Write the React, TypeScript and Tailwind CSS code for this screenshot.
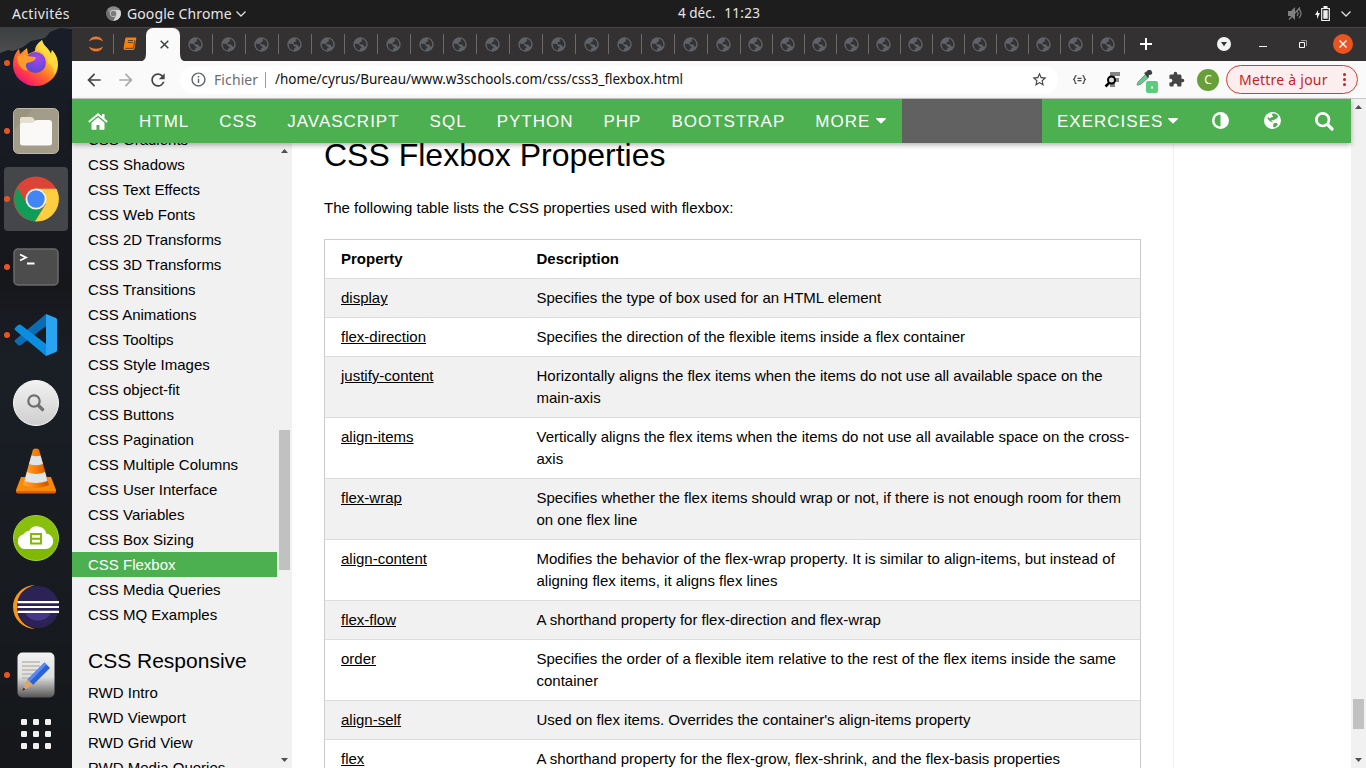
import React from "react";
import { MdExtension, MdStarBorder, MdRefresh, MdArrowBack, MdArrowForward, MdInfoOutline } from "react-icons/md";

const ui = "font-['Noto_Sans',sans-serif]";

/* ---------- Dock ---------- */
const Firefox = () => (
  <svg width="46" height="48" viewBox="0 0 46 48">
    <defs>
      <linearGradient id="ffo" x1="0.85" y1="0.1" x2="0.2" y2="0.95">
        <stop offset="0" stopColor="#fff44f" /><stop offset="0.35" stopColor="#ffb02a" />
        <stop offset="0.6" stopColor="#ff6a2a" /><stop offset="0.85" stopColor="#ff2d55" /><stop offset="1" stopColor="#e0128c" />
      </linearGradient>
      <radialGradient id="ffp" cx="0.6" cy="0.3" r="0.8"><stop offset="0" stopColor="#a644ec" /><stop offset="1" stopColor="#4d4bd0" /></radialGradient>
    </defs>
    <path d="M29 1c1 6 7 8 9 14l1-4c4 4 6 9 6 15a22.500 21 0 0 1-45 0c0-7 2-12 6-16l1 5 7-6 1 6 7-3c0-5 3-8 7-11z" fill="url(#ffo)" />
    <circle cx="22.500" cy="23.500" r="10.500" fill="url(#ffp)" />
    <path d="M24 10c2-1 3-6 5-9 1 6 7 8 9 14l1-4c6 7 8 17 2 25 0-7-2-10-6-12 0-7-5-11-11-14z" fill="#ffdf3f" opacity=".8" />
    <path d="M4 18c3-3 7-3 11-1 3 1 7 0 8 2-1 3-5 4-9 5-2 2-1 5 1 8-7-1-11-7-11-14z" fill="#ff9a2b" />
  </svg>
);
const Files = () => (
  <svg width="46" height="46" viewBox="0 0 46 46">
    <rect x=".5" y=".5" width="45" height="45" rx="5" fill="#a39c88" stroke="#bdb8a8" />
    <path d="M1 5q0-4 4-4h15L1 22z" fill="#958e79" opacity=".6" />
    <path d="M7 14v-3q0-2 2-2h9q2 0 3 2l1 2h8v8H7z" fill="#e3dfd3" />
    <path d="M7 17q0-2 2-2h10q1 0 2-1.500T24 12h12q3 0 3 3v20q0 2.500-3 2.500H10q-3 0-3-2.500z" fill="#faf9f7" />
  </svg>
);
const Chrome = ({ size = 46, gray = false }: { size?: number; gray?: boolean }) => (
  <svg width={size} height={size} viewBox="0 0 46 46">
    <circle cx="23" cy="23" r="22.500" fill={gray ? "#8b8b8b" : "#db4437"} />
    <path d="M4.500 11.500A22.500 22.500 0 0 0 22 45.500L32 28.500 23 33 13.500 28z" fill={gray ? "#6e6e6e" : "#0f9d58"} />
    <path d="M43.500 13A22.500 22.500 0 0 1 22 45.500L32.500 28.500 31 13z" fill={gray ? "#d8d8d8" : "#ffcd40"} />
    <path d="M23 12.800h20.500l-10 4z" fill={gray ? "#d8d8d8" : "#ffcd40"} />
    <circle cx="23" cy="23" r="10.500" fill={gray ? "#ddd" : "#f1f1f1"} />
    <circle cx="23" cy="23" r="8.700" fill={gray ? "#7b7b7b" : "#4285f4"} />
  </svg>
);
const Terminal = () => (
  <svg width="46" height="38" viewBox="0 0 46 38">
    <rect x="1" y="1" width="44" height="36" rx="4" fill="#4c4c4c" stroke="#6a6a6a" strokeWidth="1.500" />
    <path d="M7 6.500l6 3-6 3M14 15.500h7.500" fill="none" stroke="#fff" strokeWidth="1.800" />
  </svg>
);
const Code = () => (
  <svg width="44" height="44" viewBox="0 0 44 44">
    <path d="M1 27L32 1v12L7 32q-1.500 1-3 0l-3-3q-1-1 0-2z" fill="#0a6cb3" />
    <path d="M1 17q-1-1 0-2l3-3q1.500-1 3 0l25 19v12z" fill="#0b8ee0" />
    <path d="M32 1l10 4q1 .5 1 2v30q0 1.500-1 2l-10 4z" fill="#2ba3f3" />
  </svg>
);
const Finder = () => (
  <svg width="46" height="46" viewBox="0 0 46 46">
    <defs><linearGradient id="fg" x1="0" y1="0" x2="0" y2="1"><stop stopColor="#f2f2f2" /><stop offset="1" stopColor="#cecece" /></linearGradient></defs>
    <circle cx="23" cy="23" r="22.500" fill="url(#fg)" stroke="#fafafa" />
    <circle cx="21" cy="21" r="5.700" fill="none" stroke="#707070" strokeWidth="2.200" />
    <path d="M25 25l5.500 5.500" stroke="#707070" strokeWidth="3.200" />
  </svg>
);
const Cone = () => (
  <svg width="40" height="46" viewBox="0 0 40 46">
    <defs><linearGradient id="cg"><stop stopColor="#ffab35" /><stop offset=".55" stopColor="#f57900" /><stop offset="1" stopColor="#c65200" /></linearGradient></defs>
    <path d="M5 29h30l5 13q0 3-2 3H2q-2 0-2-3z" fill="#f78a0a" />
    <path d="M0 43h40q0 2.500-2 2.500H2Q0 45.500 0 43z" fill="#d95f00" />
    <path d="M17 1.500q3-2 6 0L33 37q-13 6-26 0z" fill="url(#cg)" />
    <path d="M15.500 7.500q4.500 1.500 9 0l2.500 8.500q-7 2.500-14 0zM11 24q9 4 18 0l2.500 9q-11.500 4-23 0z" fill="#dfe5e8" />
  </svg>
);
const Cloud = () => (
  <svg className="-mt-0.5" width="46" height="46" viewBox="0 0 46 46">
    <circle cx="23" cy="23" r="22.500" fill="#7fb900" stroke="#a6d53d" />
    <path d="M1 23a22 22 0 0 1 44 0q-22 9-44 0z" fill="#92c81a" opacity=".5" />
    <path d="M13 33a6.500 6.500 0 0 1-1.500-13q1.500-3.500 5-3a8.500 8.500 0 0 1 16 2.500 6.700 6.700 0 0 1 0 13.500z" fill="#fff" stroke="#fff" strokeWidth="2" />
    <path d="M18 19h10v9.500H18zM18 23.700h10" fill="none" stroke="#7fb900" strokeWidth="1.900" />
  </svg>
);
const Eclipse = () => (
  <svg width="48" height="44" viewBox="0 0 48 44">
    <path d="M23 0A22 22 0 0 0 23 44Q5 39 5 22T23 0z" fill="#f7941e" />
    <circle cx="26" cy="22" r="21" fill="#2c2255" />
    <path d="M13 27a13.500 12 0 0 0 26 0z" fill="#443788" />
    <path d="M5.500 17.200h41.500M5.500 22h41.500M5.500 26.800h41.500" stroke="#fff" strokeWidth="2.200" />
  </svg>
);
const Editor = () => (
  <svg width="38" height="46" viewBox="0 0 38 46">
    <defs><linearGradient id="eg" x1="0" y1="0" x2="0" y2="1"><stop stopColor="#f3f3f3" /><stop offset=".55" stopColor="#ddd" /><stop offset="1" stopColor="#555" /></linearGradient></defs>
    <rect x=".5" y=".5" width="37" height="45" rx="5" fill="url(#eg)" />
    <path d="M5 10h18M5 14h18M5 18h15M5 22h14M5 26h12M5 30.500h28" stroke="#bcb8aa" strokeWidth="1.700" />
    <path d="M10.500 27.500L27.500 10.500 33 16 16 33z" fill="#2c62d8" />
    <path d="M10.500 27.500L27.500 10.500l2 2L12.500 30z" fill="#5b8bf0" />
    <path d="M10.500 27.500L5 39l11-6z" fill="#dba36e" /><path d="M6.500 35.500L5 39l3.500-1.800z" fill="#333" />
  </svg>
);
const Grid = () => (
  <svg width="30" height="30" viewBox="0 0 30 30" fill="#f1f0ef">
    {[0, 12, 24].map((y) => [0, 12, 24].map((x) => <rect key={x + "-" + y} x={x} y={y} width="6" height="6" rx="1.200" />))}
  </svg>
);
const dock = [
  { icon: <Firefox />, run: true }, { icon: <Files />, run: true }, { icon: <Chrome />, run: true, active: true },
  { icon: <Terminal />, run: true }, { icon: <Code />, run: true }, { icon: <Finder /> }, { icon: <Cone /> },
  { icon: <Cloud /> }, { icon: <Eclipse /> }, { icon: <Editor />, run: true },
];
const Dock = () => (
  <aside className="relative flex w-[72px] shrink-0 flex-col items-center gap-1 overflow-hidden bg-[linear-gradient(#181e28,#16171b_35%,#1a1f26_45%,#15171a)] pt-1">
    <svg className="absolute left-0 top-0" width="72" height="30" viewBox="0 0 72 30">
      <defs><linearGradient id="sky" x1="0" y1="0" x2="0" y2="1"><stop stopColor="#3c3f40" /><stop offset="1" stopColor="#4b4d4e" /></linearGradient></defs>
      <path d="M0 0h72v2L60 1 50 5 45 11 31 14 23 20 13 24 8 23 0 26z" fill="url(#sky)" />
    </svg>
    {dock.map((d, i) => (
      <div key={i} className={`relative flex h-16 w-16 shrink-0 items-center justify-center rounded ${d.active ? "bg-[#454649]" : ""}`}>
        {d.run && <span className="absolute left-0 top-[29px] h-1.5 w-1.5 rounded-full bg-[#e95420]" />}
        {d.icon}
      </div>
    ))}
    <div className="pt-[8px]"><Grid /></div>
  </aside>
);

/* ---------- System bar ---------- */
const SystemBar = () => (
  <header className={`${ui} flex h-[27px] shrink-0 items-center bg-[#1d1d1d] text-[14px] text-[#e6e6e6]`}>
    <div className="w-[106px] pl-3 tracking-[0.35px]">Activités</div>
    <Chrome size={15} gray />
    <span className="ml-1.5 w-[105px] whitespace-nowrap tracking-[0.1px]">Google Chrome</span>
    <svg className="ml-1" width="10" height="6" viewBox="0 0 10 6"><path d="M.5.5L5 5 9.500.5" fill="none" stroke="#ddd" strokeWidth="1.300" /></svg>
    <div className="ml-[432px] flex gap-[9px] whitespace-nowrap text-[13.500px]"><span>4 déc.</span><span className="tracking-[0.3px]">11:23</span></div>
    <div className="ml-auto flex items-center pr-[15px]">
      <svg width="15" height="14" viewBox="0 0 15 14" fill="none" stroke="#808080">
        <path d="M0 4h3l4-4v13L3 9H0z" fill="#808080" stroke="none" /><path d="M9 4q2 2.500 0 5M11 2q4 4.500 0 9M1 12.500L12 .5" strokeWidth="1.200" />
      </svg>
      <svg className="ml-[12px]" width="15" height="16" viewBox="0 0 15 16">
        <path d="M3 4L0 9h2v4l3-6H3z" fill="#eee" /><path d="M6.700 2.500h7.600v12H6.700z" fill="none" stroke="#eee" strokeWidth="1.200" /><path d="M8.300 4.200h4.400v8.600H8.300zM8.500 0h4v2h-4z" fill="#eee" />
      </svg>
      <svg className="ml-[11px]" width="10" height="6" viewBox="0 0 10 6"><path d="M.5.5L5 5 9.500.5" fill="none" stroke="#ddd" strokeWidth="1.300" /></svg>
    </div>
  </header>
);

/* ---------- Browser chrome ---------- */
const TabGlobe = () => (
  <svg width="15" height="15" viewBox="0 0 15 15">
    <circle cx="7.500" cy="7.500" r="7.200" fill="#5f6368" />
    <path d="M1.700 6.800h2.800q1.800 0 2.200 1.600l.2 1h1.600v1.600l-1.500.6v1.700Q2 13.400 1.700 6.800z" fill="#333132" />
    <path d="M9 1.800q4 1 4.300 5.500l-.5 2.300-1.600-.2-.9-1.800H7.800L6.500 6.500l.3-1.400h1.700l.2-1.300z" fill="#333132" />
  </svg>
);
const TabStrip = () => (
  <div className="flex h-[34px] shrink-0 items-center border-t border-[#484848] bg-[#333132] pb-px">
    <div className="flex h-5 w-[42px] items-center justify-end border-r border-[#6b6969] pr-[9px]">
      <svg width="16" height="20" viewBox="0 0 16 20" fill="#f37726"><path d="M.8 7.500Q3 2.500 8 2.500t7.200 5Q12 5.200 8 5.200T.8 7.500zM.8 12.500Q3 17.500 8 17.500t7.200-5Q12 14.800 8 14.800T.8 12.500z" /></svg>
    </div>
    <div className="flex w-8 justify-center pr-0.5">
      <svg className="-mr-0.5" width="14" height="14" viewBox="0 0 14 14">
        <path d="M3.500.5h9q1 0 .8 1l-1.800 10q-.3 1.500-1.800 1.500H2Q.3 13 .6 11.300L2.200 1.700Q2.500.5 3.500.5z" fill="#ff8000" />
        <path d="M5 3.500h5M4.700 5.500h5M2 11.300h8.300l1.500-8" fill="none" stroke="#333132" strokeWidth=".8" />
      </svg>
    </div>
    <div className="relative -mb-px flex h-[34px] w-[34px] items-center justify-center rounded-t-[7px] bg-[#fafafa] pb-px pl-0.5">
      <svg className="absolute -left-2 bottom-0" width="8" height="8" viewBox="0 0 8 8"><path d="M8 0v8H0Q8 8 8 0z" fill="#fafafa" /></svg>
      <svg className="absolute -right-2 bottom-0" width="8" height="8" viewBox="0 0 8 8"><path d="M0 0v8h8Q0 8 0 0z" fill="#fafafa" /></svg>
      <svg width="9" height="9" viewBox="0 0 9 9"><path d="M.7.7l7.600 7.600M8.300.7L.7 8.300" stroke="#3c4043" strokeWidth="1.500" /></svg>
    </div>
    {Array.from({ length: 29 }, (_, i) => (
      <div key={i} className={`flex h-5 shrink-0 items-center border-r border-[#6b6969] ${i < 17 ? "w-[33px]" : "w-8"} ${i < 17 ? "pl-[7.500px]" : "pl-[7px]"}`}>
        <TabGlobe />
      </div>
    ))}
    <svg className="ml-[15px]" width="12" height="12" viewBox="0 0 12 12"><path d="M6 0v12M0 6h12" stroke="#fff" strokeWidth="2" /></svg>
    <div className="ml-auto flex items-center pr-[13px]">
      <svg width="14" height="14" viewBox="0 0 14 14"><circle cx="7" cy="7" r="7" fill="#f4f4f4" /><path d="M4 5h6L7 9.300z" fill="#333" /></svg>
      <svg className="ml-[28px]" width="8" height="14" viewBox="0 0 8 14"><path d="M0 9.500h8" stroke="#eee" /></svg>
      <svg className="ml-[32px]" width="8" height="8" viewBox="0 0 8 8" fill="none"><path d="M.5 2.500h5v5h-5z" stroke="#fff" /><path d="M2 .5h5.500v5.500" stroke="#999" /></svg>
      <svg className="ml-[26px]" width="20" height="20" viewBox="0 0 20 20"><circle cx="10" cy="10" r="10" fill="#e95420" /><path d="M6.500 6.500l7 7m0-7l-7 7" stroke="#fff" strokeWidth="1.400" /></svg>
    </div>
  </div>
);
const Toolbar = () => (
  <div className={`${ui} flex h-[38px] shrink-0 items-center border-b border-[#c9c9c9] bg-[#fafafa]`}>
    <MdArrowBack size={20} className="ml-3 text-[#444]" />
    <MdArrowForward size={20} className="ml-3 text-[#aaa]" />
    <MdRefresh size={20} className="ml-3 text-[#444]" />
    <div className="ml-3 flex h-7 w-[878px] items-center rounded-full bg-white text-[14px]">
      <MdInfoOutline size={17} className="ml-2.5 text-[#5f6368]" />
      <span className="ml-[7px] w-[45px] whitespace-nowrap tracking-[0.1px] text-[#6a6d71]">Fichier</span>
      <span className="ml-[6px] h-4 w-px bg-[#999]" />
      <span className="ml-[9px] whitespace-nowrap text-[13.500px] tracking-[-0.03px] text-[#111]">/home/cyrus/Bureau/www.w3schools.com/css/css3_flexbox.html</span>
      <MdStarBorder size={17} className="ml-auto mr-[10px] text-[#444]" />
    </div>
    <svg className="ml-[15px]" width="13" height="9" viewBox="0 0 13 9" fill="none" stroke="#444" strokeWidth="1.200">
      <path d="M3.500.7Q2 .5 2 2t-1.500 2.500Q2 5 2 7t1.500 1.300M9.500.7Q11 .5 11 2t1.500 2.500Q11 5 11 7t-1.500 1.300M4.500 3.300h4M4.500 5.700h4" />
    </svg>
    <svg className="ml-[18px]" width="17" height="18" viewBox="0 0 17 18" fill="none">
      <path d="M6 1h10v4h-5v2h4v4h-4v5H6z" fill="#858585" /><circle cx="7.500" cy="9" r="3.500" stroke="#000" strokeWidth="2" fill="#ddd" /><path d="M5 12L1.500 15.500" stroke="#000" strokeWidth="2.500" />
    </svg>
    <svg className="ml-[15px] mt-1" width="22" height="23" viewBox="0 0 22 23">
      <path d="M1 15l1-3 8-8 3 3-8 7-3 1z" fill="#5fd08a" stroke="#888" /><path d="M8 3l2-1 2-2q3-1 4 2t-3 3l-1 3z" fill="#3c4043" />
      <rect x="10" y="11" width="12" height="12" rx="2" fill="#5acd7c" /><path d="M15 16.500h2v2h-2z" fill="#fff" />
    </svg>
    <MdExtension size={17} className="ml-auto mr-[12px] text-[#444]" />
    <span className="flex h-[22px] w-[22px] items-center justify-center rounded-full bg-[#689f38] text-[12px] text-white">C</span>
    <div className="ml-[7px] mr-2 flex h-[29px] w-[132px] items-center rounded-full border border-[#d33b30] bg-[#fceeee] pl-3 text-[14px] tracking-[0.23px] text-[#c5221f]">
      <span className="whitespace-nowrap">Mettre à jour</span>
      <svg className="ml-auto mr-[11px]" width="3" height="13" viewBox="0 0 3 13" fill="#c5221f"><circle cx="1.500" cy="1.500" r="1.500" /><circle cx="1.500" cy="6.500" r="1.500" /><circle cx="1.500" cy="11.500" r="1.500" /></svg>
    </div>
  </div>
);

/* ---------- Page ---------- */
const links = ["HTML", "CSS", "JAVASCRIPT", "SQL", "PYTHON", "PHP", "BOOTSTRAP"];
const Caret = () => <svg width="10" height="6" viewBox="0 0 10 6" fill="#fff"><path d="M.5 0h9q.8.300.3 1L5.500 5.300q-.5.400-1 0L.2 1Q-.2.300.5 0z" /></svg>;
const SiteNav = () => (
  <nav className="relative z-10 flex h-11 w-[1279px] shrink-0 items-center bg-[#4caf50] text-[17px] tracking-[1px] text-white shadow-[0_2px_5px_rgba(0,0,0,0.3)]">
    <svg className="mx-4" width="20" height="17" viewBox="0 0 20 17" fill="#fff">
      <path d="M10 4.300l6.500 5.500V16q0 .8-.8.8h-4.200V12h-3v4.800H4.300q-.8 0-.8-.8V9.800z" />
      <path d="M.8 9L10 1.300 19.200 9" fill="none" stroke="#fff" strokeWidth="1.900" /><path d="M14 1h2.500v5.500L14 4.500z" />
    </svg>
    {links.map((l) => <span key={l} className="px-[15px] pt-0.5">{l}</span>)}
    <span className="flex items-center gap-[6px] pl-[15px]"><span className="pt-0.5">MORE</span><Caret /></span>
    <div className="ml-auto h-full w-[140px] bg-[#616161]" />
    <div className="flex h-full w-[309px] items-center pl-[15px]">
      <span className="flex w-[122px] items-center gap-[5px]"><span className="pt-0.5">EXERCISES</span><Caret /></span>
      <svg className="-mt-0.5 ml-[33px]" width="17" height="17" viewBox="0 0 17 17"><circle cx="8.500" cy="8.500" r="8.500" fill="#fff" /><path d="M8.500 2.500v12a6 6 0 0 1 0-12z" fill="#4caf50" /></svg>
      <svg className="-mt-0.5 ml-[35px]" width="17" height="17" viewBox="0 0 17 17">
        <circle cx="8.500" cy="8.500" r="8.500" fill="#fff" />
        <path d="M7.500 1.800l3-.4 3 1.600 1 2.500-1.500 0-.5 1.500-1.500.3L9.500 8.500 8 8l-.8 1 1.500.5-.2 1L5.500 9 3.500 6.500 4 5l2 1.500 1-1.200L9 5 8.500 3.500z" fill="#4caf50" />
        <path d="M10 11l2.500 0 1.500 1.500-2.500 2.500-2 .5-.5-2.500z" fill="#4caf50" />
      </svg>
      <svg className="ml-[34px]" width="19" height="19" viewBox="0 0 19 19" fill="none" stroke="#fff"><circle cx="7.700" cy="7.700" r="6.300" strokeWidth="2.700" /><path d="M12.700 12.700l4.300 4.300" strokeWidth="3.200" strokeLinecap="round" /></svg>
    </div>
  </nav>
);
const side = ["Gradients", "Shadows", "Text Effects", "Web Fonts", "2D Transforms", "3D Transforms", "Transitions", "Animations", "Tooltips", "Style Images", "object-fit", "Buttons", "Pagination", "Multiple Columns", "User Interface", "Variables", "Box Sizing", "Flexbox", "Media Queries", "MQ Examples"];
const Arrow = ({ up = false }: { up?: boolean }) => (
  <svg width="7" height="4" viewBox="0 0 7 4" fill="#505050"><path d={up ? "M0 4L3.500 0 7 4z" : "M0 0l3.500 4L7 0z"} /></svg>
);
const Sidebar = () => (
  <aside className="flex w-[220px] shrink-0 bg-[#f1f1f1]">
    <div className="-mt-4 w-[205px] text-[15px] leading-[25px]">
      {side.map((s) => <div key={s} className={`h-[25px] pl-4 ${s === "Flexbox" ? "bg-[#4caf50] text-white" : ""}`}>CSS {s}</div>)}
      <h2 className="mt-[18px] pl-4 text-[21px] leading-8">CSS Responsive</h2>
      <div className="mt-[3px]">{["Intro", "Viewport", "Grid View", "Media Queries"].map((s) => <div key={s} className="h-[25px] pl-4">RWD {s}</div>)}</div>
    </div>
    <div className="flex w-[15px] flex-col items-center pt-[6px]">
      <Arrow up /><div className="mt-[277px] h-[140px] w-[11px] bg-[#c1c1c1]" /><div className="mt-auto flex pb-[6px]"><Arrow /></div>
    </div>
  </aside>
);
const rows = [
  ["display", "Specifies the type of box used for an HTML element"],
  ["flex-direction", "Specifies the direction of the flexible items inside a flex container"],
  ["justify-content", "Horizontally aligns the flex items when the items do not use all available space on the main-axis"],
  ["align-items", "Vertically aligns the flex items when the items do not use all available space on the cross-axis"],
  ["flex-wrap", "Specifies whether the flex items should wrap or not, if there is not enough room for them on one flex line"],
  ["align-content", "Modifies the behavior of the flex-wrap property. It is similar to align-items, but instead of aligning flex items, it aligns flex lines"],
  ["flex-flow", "A shorthand property for flex-direction and flex-wrap"],
  ["order", "Specifies the order of a flexible item relative to the rest of the flex items inside the same container"],
  ["align-self", "Used on flex items. Overrides the container's align-items property"],
  ["flex", "A shorthand property for the flex-grow, flex-shrink, and the flex-basis properties"],
];
const Content = () => (
  <main className="w-[882px] shrink-0 border-r border-[#f1f1f1] pl-8">
    <h2 className="-mt-[12px] text-[32px] leading-[48px]">CSS Flexbox Properties</h2>
    <p className="mt-[18px] text-[15px] leading-[22px]">The following table lists the CSS properties used with flexbox:</p>
    <div className="mt-5 w-[817px] border border-[#ccc] text-[15px] leading-[22px]">
      <div className="flex border-b border-[#ddd] py-2 pl-4 font-bold"><div className="w-[195.500px]">Property</div><div>Description</div></div>
      {rows.map(([a, b], i) => (
        <div key={a} className={`flex border-b border-[#ddd] py-2 pl-4 ${i % 2 === 0 ? "bg-[#f1f1f1]" : "bg-white"}`}>
          <div className="w-[195.500px] shrink-0"><a className="underline">{a}</a></div>
          <div className="pr-2">{b}</div>
        </div>
      ))}
    </div>
  </main>
);

export default function App() {
  return (
    <div className="flex h-[768px] w-[1366px] flex-col overflow-hidden bg-white">
      <SystemBar />
      <div className="flex min-h-0 flex-1">
        <Dock />
        <div className="flex min-w-0 flex-1 flex-col">
          <TabStrip />
          <Toolbar />
          <div className="flex min-h-0 flex-1 font-['Liberation_Sans',Arial,sans-serif] text-black">
            <div className="flex w-[1279px] shrink-0 flex-col">
              <SiteNav />
              <div className="flex min-h-0 flex-1 overflow-hidden"><Sidebar /><Content /></div>
            </div>
            <div className="flex w-[15px] flex-col items-center bg-[#f1f1f1] pt-[6px]">
              <Arrow up /><div className="mt-[590px] h-[30px] w-[11px] bg-[#c1c1c1]" /><div className="mt-auto flex pb-[6px]"><Arrow /></div>
            </div>
          </div>
        </div>
      </div>
    </div>
  );
}
